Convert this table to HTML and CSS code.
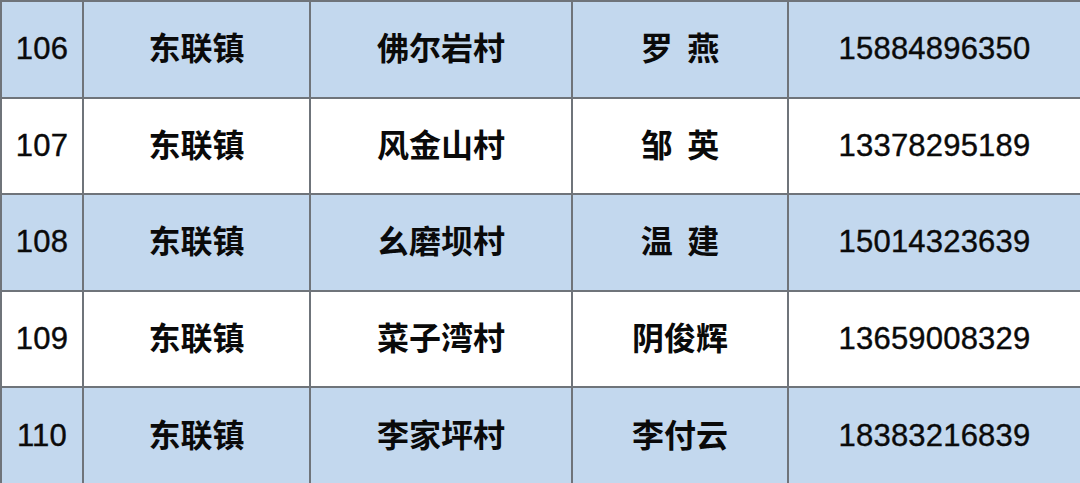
FILE: index.html
```html
<!DOCTYPE html>
<html lang="zh">
<head>
<meta charset="utf-8">
<link rel="stylesheet" href="styles.css">
</head>
<body>
<table class="grid">
  <colgroup>
    <col class="c1"><col class="c2"><col class="c3"><col class="c4"><col class="c5">
  </colgroup>
  <tbody>
    <tr class="blue">
      <td class="num">106</td><td class="zh">东联镇</td><td class="zh">佛尔岩村</td><td class="zh">罗&nbsp;&nbsp;燕</td><td class="num">15884896350</td>
    </tr>
    <tr class="white">
      <td class="num">107</td><td class="zh">东联镇</td><td class="zh">风金山村</td><td class="zh">邹&nbsp;&nbsp;英</td><td class="num">13378295189</td>
    </tr>
    <tr class="blue">
      <td class="num">108</td><td class="zh">东联镇</td><td class="zh">幺磨坝村</td><td class="zh">温&nbsp;&nbsp;建</td><td class="num">15014323639</td>
    </tr>
    <tr class="white">
      <td class="num">109</td><td class="zh">东联镇</td><td class="zh">菜子湾村</td><td class="zh">阴俊辉</td><td class="num">13659008329</td>
    </tr>
    <tr class="blue">
      <td class="num">110</td><td class="zh">东联镇</td><td class="zh">李家坪村</td><td class="zh">李付云</td><td class="num">18383216839</td>
    </tr>
  </tbody>
</table>
</body>
</html>
```
FILE: styles.css
```css
html, body {
  margin: 0;
  padding: 0;
  background: #ffffff;
}
.grid {
  width: 1080px;
  height: 483px;
  border-collapse: collapse;
  table-layout: fixed;
}
.c1 { width: 82px; }
.c2 { width: 227px; }
.c3 { width: 262px; }
.c4 { width: 216px; }
.c5 { width: 293px; }
.grid tr { height: 96.6px; }
.grid td {
  border: 2px solid #6f747a;
  text-align: center;
  vertical-align: middle;
  padding: 0;
  color: #0a0a0a;
  white-space: nowrap;
}
.grid td + td {
  border-left-color: #4a4e54;
}
.blue td { background: #c3d8ee; }
.white td { background: #ffffff; }
.num {
  font-family: "Liberation Sans", Arial, sans-serif;
  font-size: 31px;
  font-weight: 400;
  letter-spacing: 0.2px;
  -webkit-text-stroke: 0.4px #0a0a0a;
}
.grid td.zh {
  font-family: "Noto Sans CJK SC", "Noto Sans", sans-serif;
  font-size: 32px;
  font-weight: 700;
  padding-bottom: 6px;
}
```
